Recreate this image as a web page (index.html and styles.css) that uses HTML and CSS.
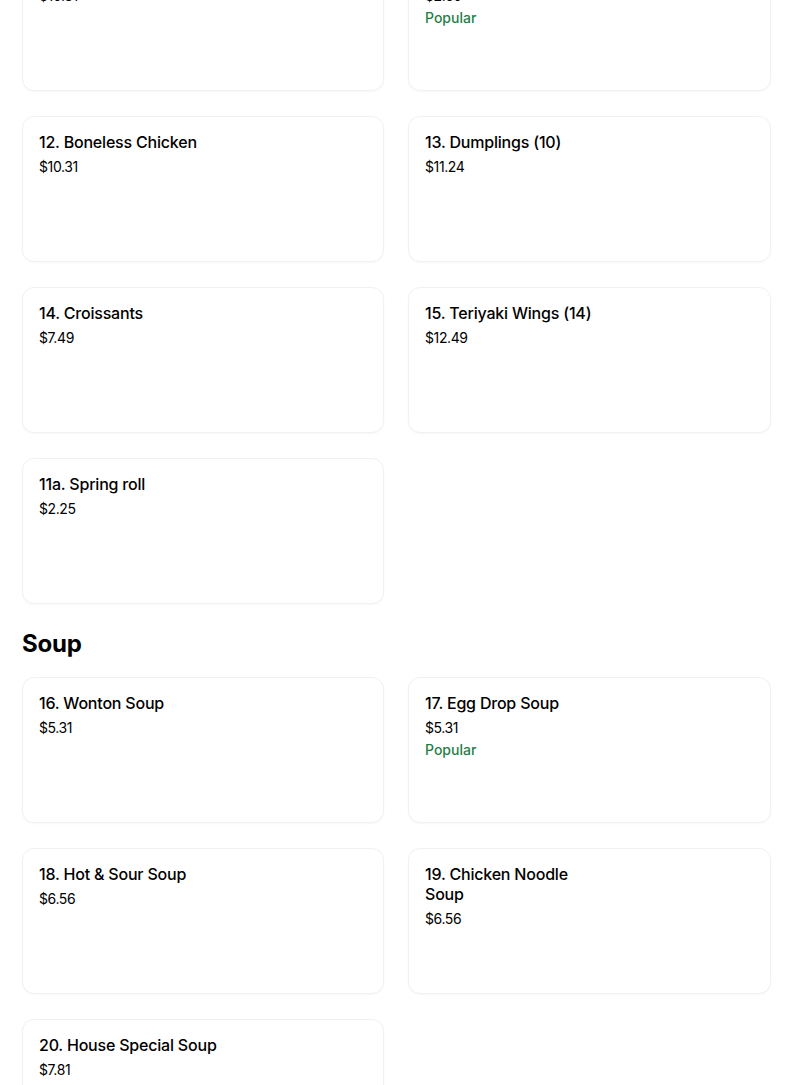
FILE: index.html
```html
<!DOCTYPE html>
<html>
<head>
<meta charset="utf-8">
<link rel="stylesheet" href="styles.css">
</head>
<body>
<main class="menu">
  <section class="category">
    <div class="grid">
      <div class="card"><div class="title">10. Sweet &amp; Sour Chicken</div><div class="price">$10.31</div></div>
      <div class="card"><div class="title">11. Egg Roll</div><div class="price">$2.50</div><div class="tag">Popular</div></div>
      <div class="card"><div class="title">12. Boneless Chicken</div><div class="price">$10.31</div></div>
      <div class="card"><div class="title">13. Dumplings (10)</div><div class="price">$11.24</div></div>
      <div class="card"><div class="title">14. Croissants</div><div class="price">$7.49</div></div>
      <div class="card"><div class="title">15. Teriyaki Wings (14)</div><div class="price">$12.49</div></div>
      <div class="card"><div class="title">11a. Spring roll</div><div class="price">$2.25</div></div>
    </div>
  </section>
  <section class="category">
    <h2 class="heading">Soup</h2>
    <div class="grid">
      <div class="card"><div class="title">16. Wonton Soup</div><div class="price">$5.31</div></div>
      <div class="card"><div class="title">17. Egg Drop Soup</div><div class="price">$5.31</div><div class="tag">Popular</div></div>
      <div class="card"><div class="title">18. Hot &amp; Sour Soup</div><div class="price">$6.56</div></div>
      <div class="card"><div class="title narrow">19. Chicken Noodle Soup</div><div class="price">$6.56</div></div>
      <div class="card"><div class="title">20. House Special Soup</div><div class="price">$7.81</div></div>
    </div>
  </section>
</main>
</body>
</html>
```
FILE: styles.css
```css
html, body {
  margin: 0;
  padding: 0;
  background: #ffffff;
  overflow: hidden;
}
body {
  font-family: Inter, "Noto Sans", "Liberation Sans", sans-serif;
  color: #000000;
}
.menu {
  margin-top: -55px;
  padding: 0 0 0 22px;
  width: 749px;
}
.grid {
  display: grid;
  grid-template-columns: 362px 363px;
  column-gap: 24px;
  row-gap: 25px;
}
.card {
  box-sizing: border-box;
  height: 146px;
  border: 1px solid #f1f1f1;
  border-radius: 12px;
  box-shadow: 0 1px 2px rgba(0,0,0,0.03);
  padding: 15px 16px;
  background: #fff;
}
.title {
  font-size: 16px;
  line-height: 20px;
  font-weight: 500;
  letter-spacing: -0.2px;
}
.title.narrow {
  max-width: 170px;
}
.price {
  margin-top: 5px;
  font-size: 14px;
  line-height: 20px;
  font-weight: 400;
  letter-spacing: -0.4px;
  color: #000;
}
.tag {
  margin-top: 2px;
  font-size: 14px;
  line-height: 20px;
  font-weight: 500;
  color: #1f8048;
}
.heading {
  margin: 24px 0 17px;
  font-size: 24px;
  line-height: 32px;
  font-weight: 700;
  letter-spacing: -0.2px;
}
```
